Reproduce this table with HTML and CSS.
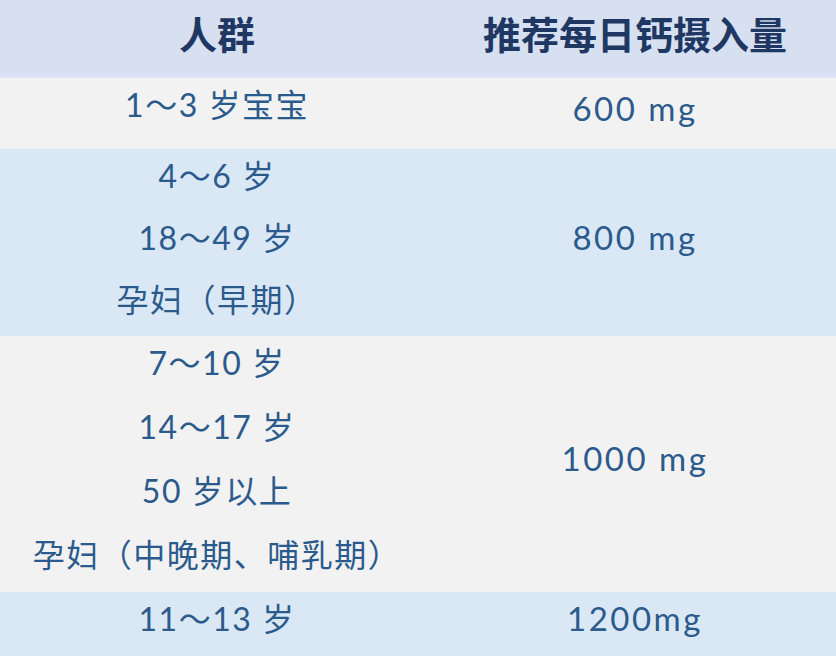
FILE: index.html
```html
<!DOCTYPE html>
<html lang="zh-CN">
<head>
<meta charset="utf-8">
<title>推荐每日钙摄入量</title>
<link rel="stylesheet" href="styles.css">
</head>
<body>
<div class="table">
  <div class="row head">
    <div class="cell">人群</div>
    <div class="cell">推荐每日钙摄入量</div>
  </div>
  <div class="row gray r1">
    <div class="cell left"><div class="line">1～3 岁宝宝</div></div>
    <div class="cell right">600 mg</div>
  </div>
  <div class="row blue r2">
    <div class="cell left">
      <div class="line">4～6 岁</div>
      <div class="line">18～49 岁</div>
      <div class="line">孕妇（早期）</div>
    </div>
    <div class="cell right">800 mg</div>
  </div>
  <div class="row gray r3">
    <div class="cell left">
      <div class="line">7～10 岁</div>
      <div class="line">14～17 岁</div>
      <div class="line">50 岁以上</div>
      <div class="line">孕妇（中晚期、哺乳期）</div>
    </div>
    <div class="cell right">1000 mg</div>
  </div>
  <div class="row blue r4">
    <div class="cell left"><div class="line">11～13 岁</div></div>
    <div class="cell right">1200mg</div>
  </div>
</div>
</body>
</html>
```
FILE: styles.css
```css
html, body {
  margin: 0;
  padding: 0;
  background: #dae8f5;
}
.table {
  width: 836px;
  font-family: "Lato", "Noto Sans CJK SC", sans-serif;
  color: #2b5a8c;
  font-size: 32px;
}
.row {
  display: grid;
  grid-template-columns: 434px 1fr;
}
.head {
  height: 74px;
  background: #d7e0f1;
  border-bottom: 4px solid #dde2f6;
  color: #1f3763;
  font-weight: 700;
  font-size: 38px;
  font-family: "Noto Sans CJK SC", sans-serif;
}
.head .cell {
  display: flex;
  align-items: center;
  justify-content: center;
  padding-bottom: 10px;
}
.gray { background: #f2f2f2; }
.blue { background: #dae8f5; }
.r1 { height: 71px; }
.r2 { height: 187px; }
.r3 { height: 256px; }
.r4 { height: 64px; }
.left {
  display: flex;
  flex-direction: column;
  align-items: center;
  gap: 8px;
}
.r3 .left { gap: 10px; }
.line {
  height: 54px;
  line-height: 54px;
  letter-spacing: 1.5px;
}
.right {
  display: flex;
  align-items: center;
  justify-content: center;
  padding-bottom: 12px;
  font-size: 33px;
  letter-spacing: 2.5px;
}
```
